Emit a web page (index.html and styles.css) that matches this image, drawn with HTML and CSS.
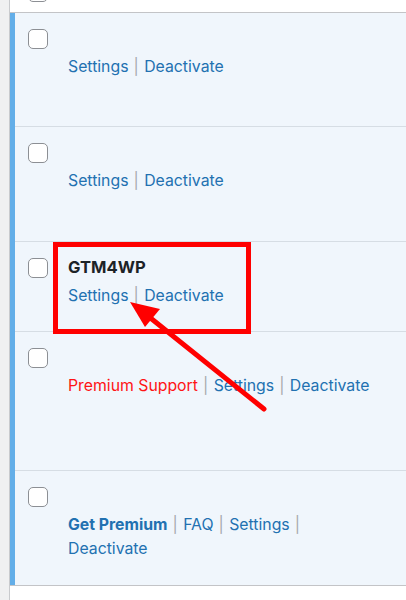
FILE: index.html
```html
<!DOCTYPE html>
<html lang="en">
<head>
	<meta charset="UTF-8">
	<title>Plugins</title>
	<link rel="stylesheet" href="styles.css">
</head>
<body>
	<div class="plugins">
		<div class="row prev">
			<div class="check"><span class="box"></span></div>
		</div>

		<div class="row active r1">
			<div class="check"><span class="box"></span></div>
			<div class="title">
				<strong>&nbsp;</strong>
				<div class="actions">
					<span class="item"><a href="#">Settings</a><span class="sep">|</span></span>
					<span class="item"><a href="#">Deactivate</a></span>
				</div>
			</div>
		</div>

		<div class="row active r2">
			<div class="check"><span class="box"></span></div>
			<div class="title">
				<strong>&nbsp;</strong>
				<div class="actions">
					<span class="item"><a href="#">Settings</a><span class="sep">|</span></span>
					<span class="item"><a href="#">Deactivate</a></span>
				</div>
			</div>
		</div>

		<div class="row active r3">
			<div class="check"><span class="box"></span></div>
			<div class="title">
				<strong>GTM4WP</strong>
				<div class="actions">
					<span class="item"><a href="#">Settings</a><span class="sep">|</span></span>
					<span class="item"><a href="#">Deactivate</a></span>
				</div>
			</div>
		</div>

		<div class="row active r4">
			<div class="check"><span class="box"></span></div>
			<div class="title">
				<strong>&nbsp;</strong>
				<div class="actions">
					<span class="item"><a href="#" class="premium">Premium Support</a><span class="sep">|</span></span>
					<span class="item"><a href="#">Settings</a><span class="sep">|</span></span>
					<span class="item"><a href="#">Deactivate</a></span>
				</div>
			</div>
		</div>

		<div class="row active r5">
			<div class="check"><span class="box"></span></div>
			<div class="title">
				<strong>&nbsp;</strong>
				<div class="actions">
					<span class="item"><a href="#" class="get">Get Premium</a><span class="sep">|</span></span>
					<span class="item"><a href="#">FAQ</a><span class="sep">|</span></span>
					<span class="item"><a href="#">Settings</a><span class="sep">|</span></span>
					<span class="item"><a href="#">Deactivate</a></span>
				</div>
			</div>
		</div>

		<div class="row next"></div>
	</div>

	<!-- annotation drawn over the list -->
	<svg class="mark" width="406" height="600" viewBox="0 0 406 600">
		<rect x="55.5" y="244.5" width="193" height="87" fill="none" stroke="#ff0000" stroke-width="5"/>
		<line x1="264" y1="409" x2="148" y2="316" stroke="#ff0000" stroke-width="5" stroke-linecap="round"/>
		<polygon points="130,302 160,309 145,327" fill="#ff0000"/>
	</svg>
</body>
</html>
```

FILE: styles.css
```css
body, div {
	margin: 0;
	padding: 0;
}
body {
	position: relative;
	height: 600px;
	overflow: hidden;
	background: #f0f0f1;
	font: 15.8px/24px Inter, "Liberation Sans", sans-serif;
	color: #1d2327;
}
.plugins {
	margin-left: 9px;
	height: 600px;
	background: #fff;
	border-left: 1px solid #c9cacd;
}
.row {
	display: flex;
	align-items: flex-start;
	box-sizing: border-box;
}
.row.prev {
	height: 13px;
	overflow: hidden;
	border-bottom: 1px solid #c3c4c7;
}
.row.prev .check {
	padding-top: 0;
	margin-top: -18px;
	border-left-color: transparent;
}
.row.active {
	background: #f0f6fc;
	box-shadow: inset 0 -1px 0 #d6dde4;
}
.r1 { height: 114px; }
.r2 { height: 115px; }
.r3 { height: 90px; }
.r4 { height: 139px; }
.r5 { height: 114px; box-shadow: none !important; }
.row.next {
	border-top: 1px solid #c3c4c7;
}
.check {
	box-sizing: border-box;
	width: 58px;
	height: 100%;
	padding: 16px 0 0 13px;
	border-left: 5px solid #63aee8;
}
.box {
	display: block;
	box-sizing: border-box;
	width: 20px;
	height: 20px;
	border: 1px solid #8c8f94;
	border-radius: 5px;
	background: #fff;
}
.title {
	width: 306px;
	padding-top: 14px;
}
.title strong {
	display: block;
	height: 22px;
	line-height: 22px;
	font-size: 16.6px;
	font-weight: 700;
	color: #1d2327;
}
.actions {
	margin-top: 6px;
}
.actions a {
	color: #2271b1;
	text-decoration: none;
}
.actions a.premium {
	color: #ff1414;
}
.actions a.get {
	font-weight: 700;
}
.item {
	white-space: nowrap;
}
.sep {
	margin: 0 1px 0 5px;
	color: #a7aaad;
}
.mark {
	position: absolute;
	top: 0;
	left: 0;
	pointer-events: none;
}
```
